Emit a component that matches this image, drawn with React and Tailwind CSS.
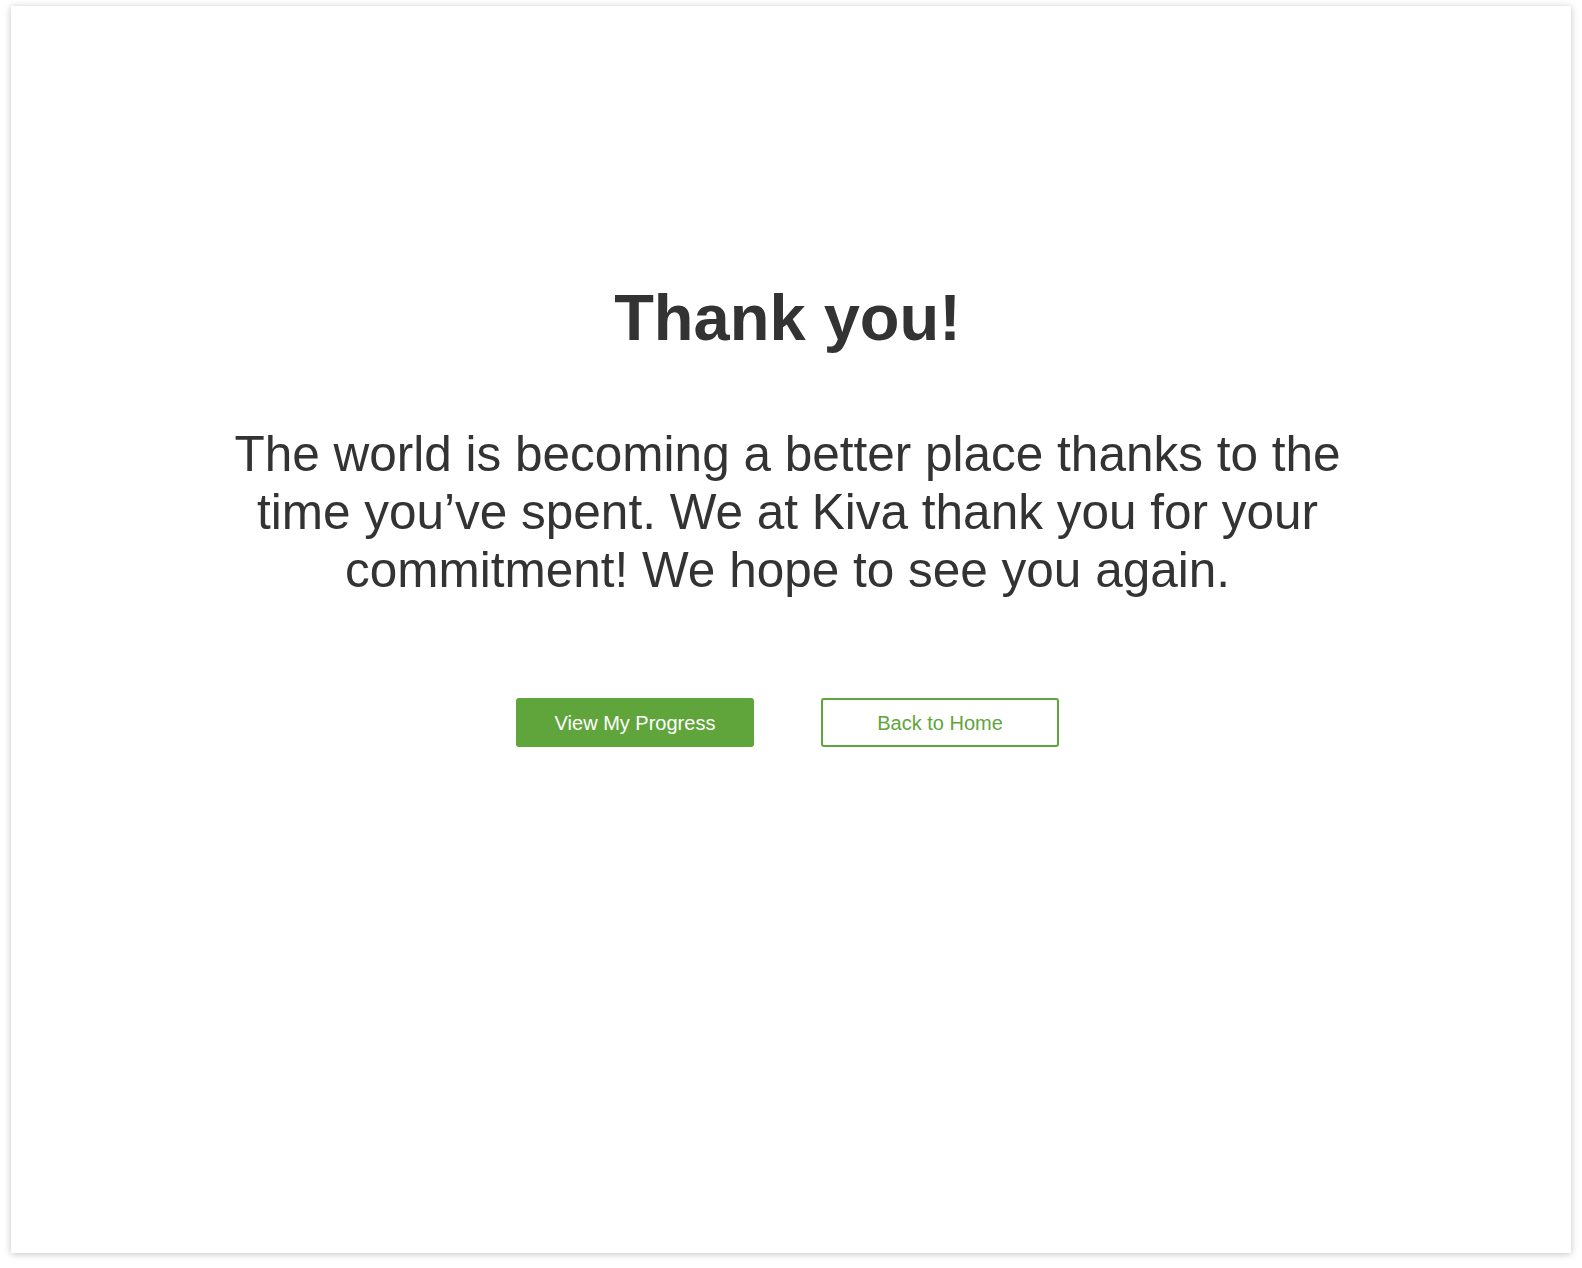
const ThankYou = () => (
  <div className="min-h-[1268px] bg-white pt-[6px] pl-[11px] font-['Liberation_Sans',Arial,sans-serif]">
    <div className="w-[1560px] h-[1247px] bg-white shadow-[0_1px_7px_rgba(0,0,0,0.24)] flex flex-col items-center pt-[279px] pr-[7px] text-[#333333]">
      <h1 className="text-[65px] leading-[65px] font-bold">Thank you!</h1>
      <p className="mt-[75px] text-[49.5px] leading-[58px] text-center">
        The world is becoming a better place thanks to the
        <br />
        time you’ve spent. We at Kiva thank you for your
        <br />
        commitment! We hope to see you again.
      </p>
      <div className="mt-[99px] flex gap-[67px]">
        <button className="w-[238px] h-[49px] rounded-[3px] bg-[#5fa53b] text-white text-[20px]">
          View My Progress
        </button>
        <button className="w-[238px] h-[49px] rounded-[3px] border-2 border-[#5fa53b] text-[#5fa53b] text-[20px]">
          Back to Home
        </button>
      </div>
    </div>
  </div>
);

export default function App() {
  return <ThankYou />;
}
